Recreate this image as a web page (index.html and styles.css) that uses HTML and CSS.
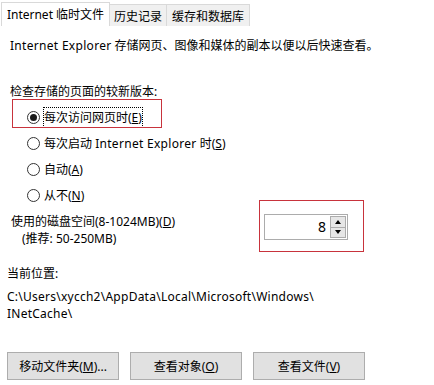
FILE: index.html
```html
<!DOCTYPE html>
<html lang="zh-CN">
<head>
<meta charset="utf-8">
<title>Internet 临时文件</title>
<link rel="stylesheet" href="styles.css">
</head>
<body>
<div class="dlg">
  <div class="tabs">
    <div class="tab tab-active">Internet 临时文件</div>
    <div class="tab tab-2">历史记录</div>
    <div class="tab tab-3">缓存和数据库</div>
  </div>
  <div class="panel">
    <p class="desc"><span class="lat">Internet Explorer</span> 存储网页、图像和媒体的副本以便以后快速查看。</p>
    <p class="label">检查存储的页面的较新版本:</p>
    <div class="radios">
      <div class="opt hl"><span class="radio checked"></span><span class="focus">每次访问网页时(<u>E</u>)</span></div>
      <div class="opt"><span class="radio"></span><span class="txt">每次启动 <span class="lat">Internet Explorer</span> 时(<u>S</u>)</span></div>
      <div class="opt"><span class="radio"></span><span class="txt">自动(<u>A</u>)</span></div>
      <div class="opt"><span class="radio"></span><span class="txt">从不(<u>N</u>)</span></div>
    </div>
    <div class="disk">
      <div class="disk-text">
        <div class="line">使用的磁盘空间(8-1024MB)(<u>D</u>)</div>
        <div class="line indent">(推荐: 50-250MB)</div>
      </div>
      <div class="spin hl2">
        <div class="spin-val">8</div>
        <div class="spin-btns">
          <div class="sb"><span class="tri-up"></span></div>
          <div class="sb"><span class="tri-down"></span></div>
        </div>
      </div>
    </div>
    <div class="loc">
      <div class="line">当前位置:</div>
      <div class="path">
        <div class="line">C:\Users\xycch2\AppData\Local\Microsoft\Windows\</div>
        <div class="line">INetCache\</div>
      </div>
    </div>
    <div class="buttons">
      <div class="btn">移动文件夹(<u>M</u>)...</div>
      <div class="btn">查看对象(<u>O</u>)</div>
      <div class="btn">查看文件(<u>V</u>)</div>
    </div>
  </div>
</div>
</body>
</html>
```
FILE: styles.css
```css
html, body {
  margin: 0;
  padding: 0;
  background: #ffffff;
}
body {
  font-family: "Noto Sans", "Noto Sans CJK SC", sans-serif;
  font-size: 12px;
  color: #000;
  width: 434px;
  height: 385px;
  overflow: hidden;
}
p { margin: 0; }
u { text-decoration: underline; text-underline-offset: 1px; }
.lat { letter-spacing: 0.3px; }

.dlg { position: relative; }

.tabs {
  display: flex;
  align-items: flex-end;
  height: 26px;
  padding-left: 1px;
  box-sizing: border-box;
}
.tab {
  box-sizing: border-box;
  height: 22px;
  border: 1px solid #d9d9d9;
  border-bottom: none;
  background: #f0f0f0;
  display: flex;
  align-items: center;
  justify-content: center;
  line-height: 17px;
  padding-top: 1px;
}
.tab + .tab { border-left: none; }
.tab-active {
  width: 109px;
  height: 24px;
  background: #ffffff;
  padding-bottom: 2px;
}
.tab-2 { width: 57px; }
.tab-3 { width: 83px; }

.panel {
  padding-left: 10px;
}
.line { line-height: 17px; }
.desc {
  line-height: 17px;
  margin-top: 11px;
}
.label {
  line-height: 17px;
  margin-top: 29px;
}

.radios {
  margin-top: 4px;
  padding-left: 17px;
}
.opt {
  height: 26px;
  display: flex;
  align-items: center;
  position: relative;
}
.radio {
  box-sizing: border-box;
  width: 13px;
  height: 13px;
  border: 1px solid #333;
  border-radius: 50%;
  background: #fff;
  margin-right: 3px;
  display: flex;
  align-items: center;
  justify-content: center;
  flex: none;
}
.radio.checked::after {
  content: "";
  width: 7px;
  height: 7px;
  border-radius: 50%;
  background: #1a1a1a;
}
.focus {
  border: 1px dotted #000;
  padding: 1px 0 1px 0;
  line-height: 17px;
}
.txt { line-height: 17px; padding-left: 1px; }

.hl::after {
  content: "";
  position: absolute;
  left: -15px;
  top: -5px;
  width: 150px;
  height: 29px;
  border: 1.5px solid #c8333c;
  box-sizing: border-box;
}

.disk {
  display: grid;
  grid-template-columns: 254px auto;
  margin-top: 5px;
}
.disk-text { padding-left: 1px; }
.indent { padding-left: 11px; }

.spin {
  margin-top: 1px;
  width: 84px;
  height: 26px;
  box-sizing: border-box;
  border: 1px solid #acacac;
  display: flex;
  position: relative;
  background: #fff;
}
.hl2::after {
  content: "";
  position: absolute;
  left: -6px;
  top: -15px;
  width: 105px;
  height: 52px;
  border: 1.5px solid #c8333c;
  box-sizing: border-box;
}
.spin-val {
  flex: 1;
  text-align: right;
  font-size: 14px;
  line-height: 24px;
  padding-right: 4px;
}
.spin-btns {
  width: 16px;
  display: flex;
  flex-direction: column;
  padding: 1px 1px 1px 0;
}
.sb {
  flex: 1;
  box-sizing: border-box;
  border: 1px solid #acacac;
  background: #e6e6e6;
  display: flex;
  align-items: center;
  justify-content: center;
}
.sb + .sb { border-top: none; }
.tri-up {
  width: 0; height: 0;
  border-left: 3px solid transparent;
  border-right: 3px solid transparent;
  border-bottom: 4px solid #000;
}
.tri-down {
  width: 0; height: 0;
  border-left: 3px solid transparent;
  border-right: 3px solid transparent;
  border-top: 4px solid #000;
}

.loc {
  margin-top: 18px;
  margin-left: -3px;
}
.path { margin-top: 6px; letter-spacing: 0.25px; }

.buttons {
  display: flex;
  gap: 11px;
  margin-top: 30px;
  margin-left: -3px;
}
.btn {
  box-sizing: border-box;
  width: 112px;
  height: 28px;
  border: 1px solid #adadad;
  background: #e1e1e1;
  display: flex;
  align-items: center;
  justify-content: center;
}
```
